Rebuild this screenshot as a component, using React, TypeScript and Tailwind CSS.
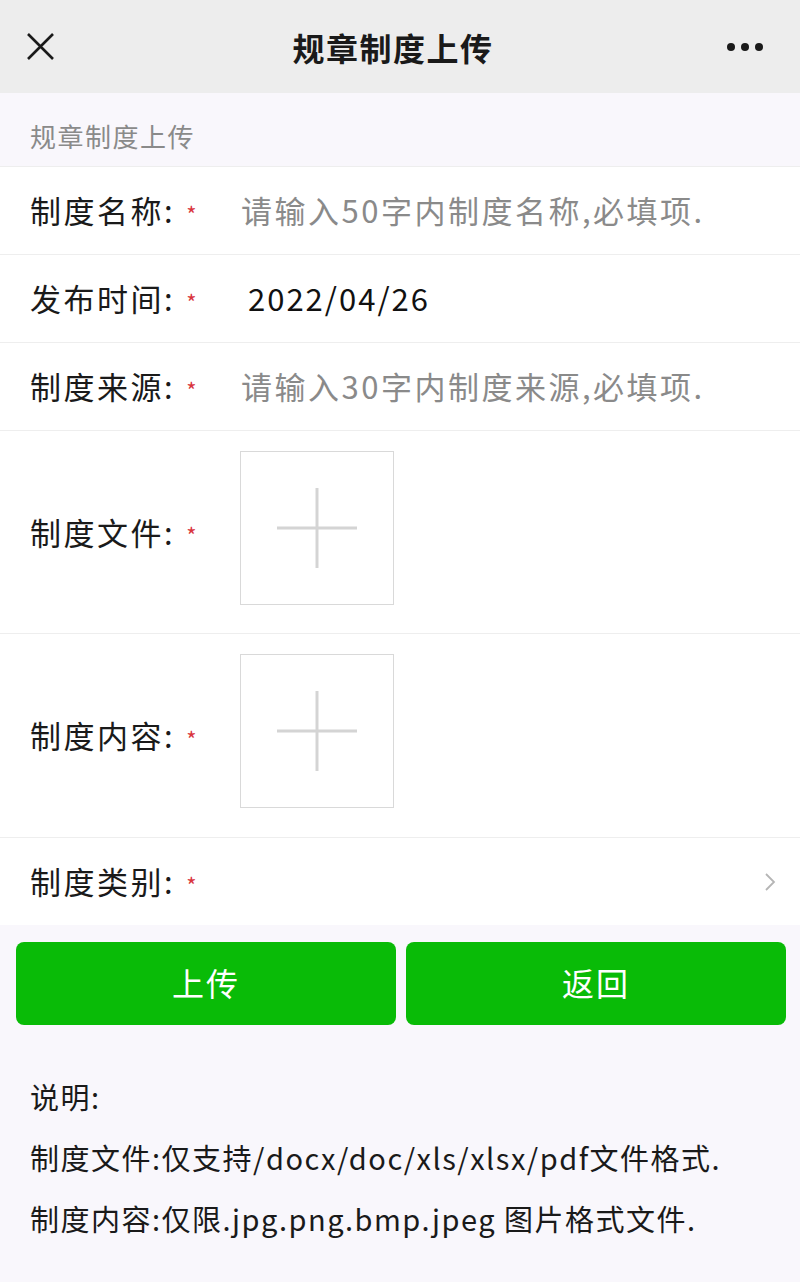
import React from "react";

const font = { fontFamily: '"Noto Sans CJK SC", "Noto Sans", sans-serif' };

function Star() {
  return <span className="text-[#d9363e] text-[22px] leading-none ml-[11px] mt-[4px] tracking-normal">*</span>;
}

function Label({ text }: { text: string }) {
  return (
    <div className="w-[210px] shrink-0 flex items-center text-[31px] tracking-[2.5px] text-[#1a1a1a]">
      <span>{text}</span>
      <Star />
    </div>
  );
}

function Upload() {
  return (
    <div className="w-[154px] h-[154px] border border-[#d9d9d9] bg-white flex items-center justify-center">
      <svg width="80" height="80" viewBox="0 0 80 80">
        <line x1="0" y1="40" x2="80" y2="40" stroke="#d4d4d4" strokeWidth="3" />
        <line x1="40" y1="0" x2="40" y2="80" stroke="#d4d4d4" strokeWidth="3" />
      </svg>
    </div>
  );
}

export default function App() {
  return (
    <div className="w-[800px] h-[1282px] bg-[#f9f7fc] flex flex-col" style={font}>
      <div className="h-[93px] bg-[#ededed] flex items-center justify-between px-[27px] shrink-0">
        <svg width="27" height="27" viewBox="0 0 27 27">
          <path d="M1 1 L26 26 M26 1 L1 26" stroke="#1a1a1a" strokeWidth="2.6" fill="none" />
        </svg>
        <div className="text-[32px] tracking-[1.5px] font-bold text-[#1a1a1a] ml-[6px]">规章制度上传</div>
        <svg width="38" height="10" viewBox="0 0 38 10" className="mr-[9px]">
          <circle cx="5" cy="5" r="4" fill="#1a1a1a" />
          <circle cx="19" cy="5" r="4" fill="#1a1a1a" />
          <circle cx="33" cy="5" r="4" fill="#1a1a1a" />
        </svg>
      </div>
      <div className="h-[74px] flex items-center pt-[12px] px-[30px] text-[26px] tracking-[1.5px] text-[#8a8a8a] border-b border-[#eeeeee] shrink-0">
        规章制度上传
      </div>
      <div className="bg-white flex flex-col">
        <div className="h-[88px] flex items-center pl-[30px] border-b border-[#eeeeee]">
          <Label text="制度名称:" />
          <span className="text-[31px] tracking-[2.5px] text-[#8a8a8a] ml-[1px]">请输入50字内制度名称,必填项.</span>
        </div>
        <div className="h-[88px] flex items-center pl-[30px] border-b border-[#eeeeee]">
          <Label text="发布时间:" />
          <span className="text-[31px] tracking-[2px] text-[#111] ml-[8px]">2022/04/26</span>
        </div>
        <div className="h-[88px] flex items-center pl-[30px] border-b border-[#eeeeee]">
          <Label text="制度来源:" />
          <span className="text-[31px] tracking-[2.5px] text-[#8a8a8a] ml-[1px]">请输入30字内制度来源,必填项.</span>
        </div>
        <div className="h-[203px] flex items-center pl-[30px] border-b border-[#eeeeee]">
          <Label text="制度文件:" />
          <div className="mb-[9px]">
            <Upload />
          </div>
        </div>
        <div className="h-[204px] flex items-center pl-[30px] border-b border-[#eeeeee]">
          <Label text="制度内容:" />
          <div className="mb-[9px]">
            <Upload />
          </div>
        </div>
        <div className="h-[87px] flex items-center pl-[30px] pr-[24px]">
          <Label text="制度类别:" />
          <div className="flex-1" />
          <svg width="12" height="20" viewBox="0 0 12 20">
            <path d="M2 2 L10 10 L2 18" stroke="#b5b5b5" strokeWidth="1.8" fill="none" />
          </svg>
        </div>
      </div>
      <div className="flex gap-[10px] pl-[16px] pr-[14px] pt-[17px]">
        <button className="flex-1 h-[83px] rounded-[8px] bg-[#09bb07] text-white text-[32px] tracking-[2px] pb-[4px]">上传</button>
        <button className="flex-1 h-[83px] rounded-[8px] bg-[#09bb07] text-white text-[32px] tracking-[2px] pb-[4px]">返回</button>
      </div>
      <div className="px-[30px] pt-[50px] text-[29px] tracking-[1.5px] text-[#1a1a1a] flex flex-col gap-[19px] leading-[42px]">
        <div>说明:</div>
        <div>制度文件:仅支持/docx/doc/xls/xlsx/pdf文件格式.</div>
        <div>制度内容:仅限.jpg.png.bmp.jpeg 图片格式文件.</div>
      </div>
    </div>
  );
}
